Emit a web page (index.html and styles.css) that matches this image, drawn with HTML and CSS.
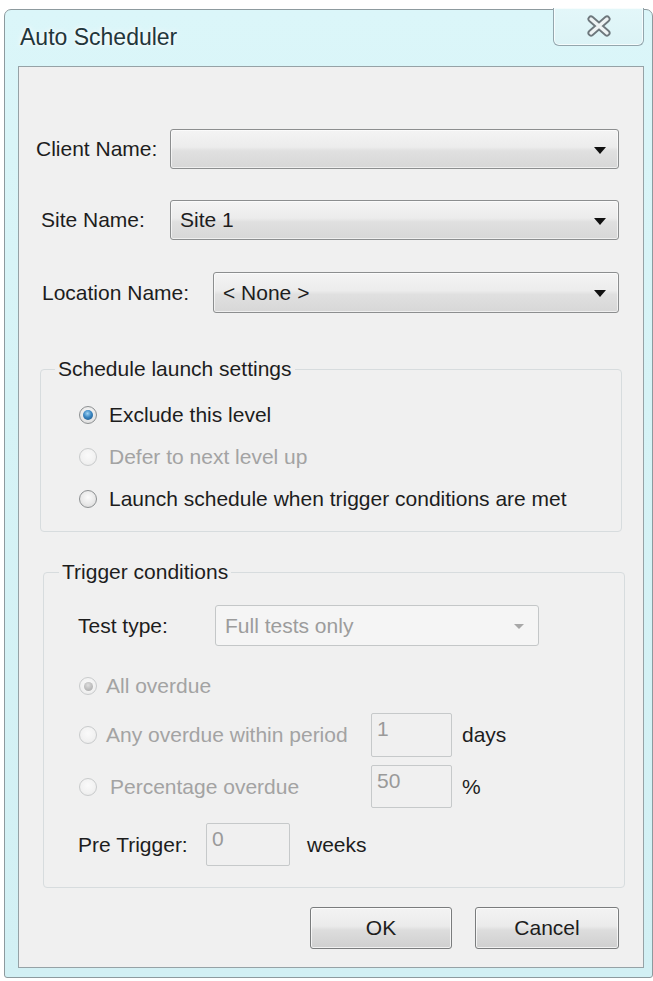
FILE: index.html
```html
<!DOCTYPE html>
<html>
<head>
<meta charset="utf-8">
<title>Auto Scheduler</title>
<link rel="stylesheet" href="styles.css">
</head>
<body>
<div class="window">
  <div class="titlebar">
    <div class="title">Auto Scheduler</div>
    <div class="close">
      <svg width="26" height="22" viewBox="0 0 26 22">
        <path d="M5 4 L21 18 M21 4 L5 18" stroke="#6d777c" stroke-width="7" stroke-linecap="round" fill="none"/>
        <path d="M5 4 L21 18 M21 4 L5 18" stroke="#eef3f4" stroke-width="3.4" stroke-linecap="round" fill="none"/>
      </svg>
    </div>
  </div>
  <div class="panel">
    <div class="row row-client">
      <span class="lbl lbl-client">Client Name:</span>
      <div class="combo combo-client"><span class="val"></span><span class="arrow"></span></div>
    </div>
    <div class="row row-site">
      <span class="lbl lbl-site">Site Name:</span>
      <div class="combo combo-site"><span class="val">Site 1</span><span class="arrow"></span></div>
    </div>
    <div class="row row-location">
      <span class="lbl lbl-location">Location Name:</span>
      <div class="combo combo-location"><span class="val">&lt; None &gt;</span><span class="arrow"></span></div>
    </div>

    <fieldset class="group group-launch">
      <legend class="legend">Schedule launch settings</legend>
      <div class="opt"><span class="radio checked"></span><span class="opt-text">Exclude this level</span></div>
      <div class="opt disabled"><span class="radio dis"></span><span class="opt-text">Defer to next level up</span></div>
      <div class="opt"><span class="radio"></span><span class="opt-text">Launch schedule when trigger conditions are met</span></div>
    </fieldset>

    <fieldset class="group group-trigger">
      <legend class="legend legend-trigger">Trigger conditions</legend>
      <div class="trow trow-type">
        <span class="tlbl tlbl-type">Test type:</span>
        <div class="combo combo-dis"><span class="val">Full tests only</span><span class="arrow arrow-dis"></span></div>
      </div>
      <div class="trow trow-all disabled">
        <span class="radio dis dis-checked"></span><span class="opt-text">All overdue</span>
      </div>
      <div class="trow trow-any">
        <span class="ropt disabled"><span class="radio dis"></span><span class="opt-text">Any overdue within period</span></span>
        <span class="tbox">1</span>
        <span class="unit">days</span>
      </div>
      <div class="trow trow-pct">
        <span class="ropt disabled"><span class="radio dis"></span><span class="opt-text">Percentage overdue</span></span>
        <span class="tbox">50</span>
        <span class="unit">%</span>
      </div>
      <div class="trow trow-pre">
        <span class="tlbl tlbl-pre">Pre Trigger:</span>
        <span class="tbox tbox-pre">0</span>
        <span class="unit unit-pre">weeks</span>
      </div>
    </fieldset>

    <div class="buttons">
      <div class="btn btn-ok">OK</div>
      <div class="btn btn-cancel">Cancel</div>
    </div>
  </div>
</div>
</body>
</html>
```

FILE: styles.css
```css
* { box-sizing: border-box; }

html, body {
  margin: 0;
  padding: 0;
  background: #ffffff;
}

body {
  font-family: "Liberation Sans", Arial, sans-serif;
  font-size: 21px;
  color: #1d1d1d;
  width: 653px;
  height: 981px;
  overflow: hidden;
}

.window {
  margin: 9px 0 0 4px;
  width: 649px;
  height: 969px;
  border: 1px solid #8d9a9e;
  border-radius: 7px 7px 3px 3px;
  background: linear-gradient(180deg, #dbf6f9 0%, #d6f3f6 40%, #d2f0f4 100%);
  display: flex;
  flex-direction: column;
}

.titlebar {
  height: 56px;
  display: flex;
  align-items: flex-start;
  padding-left: 15px;
  flex: none;
}

.title {
  margin-top: 13px;
  font-size: 23px;
  line-height: 28px;
  color: #22363b;
  text-shadow: 0 0 6px #ffffff, 0 0 3px #ffffff;
}

.close {
  margin-left: auto;
  margin-right: 8px;
  margin-top: -2px;
  width: 91px;
  height: 38px;
  border: 1px solid #93a6ad;
  border-top: none;
  border-radius: 0 0 6px 6px;
  background: linear-gradient(180deg, #e3f7f9 0%, #dcf3f6 100%);
  box-shadow: inset 0 0 0 1px rgba(255,255,255,0.7);
  display: flex;
  align-items: center;
  justify-content: center;
  padding-bottom: 2px;
}

.panel {
  margin: 0 8px 0 13px;
  height: 902px;
  border: 1px solid #96a2a6;
  background: #f0f0f0;
  display: flex;
  flex-direction: column;
  flex: none;
}

.row {
  display: flex;
  align-items: center;
  flex: none;
}

.lbl {
  flex: none;
  line-height: 24px;
}

.row-client { margin-top: 62px; padding-left: 17px; }
.row-site { margin-top: 31px; padding-left: 22px; }
.row-location { margin-top: 32px; padding-left: 23px; }

.lbl-client { width: 134px; }
.lbl-site { width: 129px; }
.lbl-location { width: 171px; }

.combo {
  display: flex;
  align-items: center;
  border: 1px solid #8c8e8f;
  border-radius: 3px;
  background: linear-gradient(180deg, #f4f4f4 0%, #ececec 45%, #e0e0e0 55%, #d7d7d7 100%);
  box-shadow: inset 0 0 0 1px rgba(255,255,255,0.6);
  padding-left: 9px;
}

.combo-client { width: 449px; height: 40px; }
.combo-site { width: 449px; height: 40px; }
.combo-location { width: 406px; height: 41px; }

.val {
  flex: 1;
  line-height: 24px;
  white-space: nowrap;
}

.arrow {
  flex: none;
  width: 0;
  height: 0;
  border-left: 6px solid transparent;
  border-right: 6px solid transparent;
  border-top: 7px solid #111;
  margin-right: 12px;
  margin-top: 2px;
}

.group {
  margin: 0;
  border: 1px solid #d7dcde;
  border-radius: 4px;
  min-width: 0;
  flex: none;
}

.legend {
  padding: 0 3px;
  line-height: 24px;
  color: #1d1d1d;
}

.group-launch {
  margin: 44px 21px 0 21px;
  padding: 13px 0 11px 0;
}

.group-launch .legend { margin-left: 14px; }

.opt {
  height: 42px;
  display: flex;
  align-items: center;
  padding-left: 38px;
}

.radio {
  flex: none;
  width: 18px;
  height: 18px;
  border-radius: 50%;
  border: 1px solid #8d9092;
  background: radial-gradient(circle at 50% 40%, #fbfbfb 0%, #e9e9e9 55%, #d4d4d4 100%);
  margin-right: 12px;
  display: flex;
  align-items: center;
  justify-content: center;
}

.radio.checked::after {
  content: "";
  width: 10px;
  height: 10px;
  border-radius: 50%;
  background: radial-gradient(circle at 45% 35%, #9fd3f3 0%, #3a86c2 45%, #174c7c 100%);
}

.radio.dis {
  border-color: #c9cbcc;
  background: radial-gradient(circle at 50% 40%, #fafafa 0%, #f1f1f1 60%, #e6e6e6 100%);
}

.radio.dis-checked::after {
  content: "";
  width: 9px;
  height: 9px;
  border-radius: 50%;
  background: radial-gradient(circle at 45% 35%, #dedede 0%, #b9b9b9 60%, #a7a7a7 100%);
}

.opt-text {
  line-height: 24px;
  white-space: nowrap;
}

.disabled .opt-text,
.disabled.opt .opt-text {
  color: #a3a3a3;
}

.group-trigger {
  margin: 28px 18px 0 24px;
  padding: 21px 0 21px 34px;
}

.legend-trigger { margin-left: -19px; }

.trow {
  display: flex;
  align-items: center;
  flex: none;
}

.tlbl {
  flex: none;
  line-height: 24px;
}

.trow-type { height: 41px; }
.tlbl-type { width: 137px; }

.combo-dis {
  width: 324px;
  height: 41px;
  border-color: #c4c7c8;
  background: #f5f5f5;
  box-shadow: none;
}

.combo-dis .val { color: #9c9c9c; }

.arrow-dis {
  border-top-color: #a8a8a8;
  border-left-width: 5px;
  border-right-width: 5px;
  border-top-width: 5px;
  margin-right: 14px;
}

.trow-all {
  margin-top: 20px;
  height: 40px;
  padding-left: 1px;
}

.trow-all .radio { margin-right: 9px; }

.ropt {
  flex: none;
  width: 293px;
  display: flex;
  align-items: center;
  padding-left: 1px;
}

.ropt .radio { margin-right: 9px; }

.trow-any { margin-top: 7px; height: 44px; }
.trow-pct { margin-top: 8px; height: 43px; }
.trow-pct .radio { margin-right: 13px; }

.tbox {
  flex: none;
  width: 81px;
  height: 100%;
  border: 1px solid #c6c9ca;
  border-radius: 2px;
  background: #f0f0f0;
  color: #9a9a9a;
  padding: 3px 0 0 5px;
  line-height: 24px;
}

.unit {
  margin-left: 10px;
  line-height: 24px;
}

.trow-pre { margin-top: 15px; height: 43px; }
.tlbl-pre { width: 128px; }
.tbox-pre { width: 84px; }
.unit-pre { margin-left: 17px; }

.buttons {
  margin-top: 19px;
  margin-right: 24px;
  display: flex;
  justify-content: flex-end;
  gap: 23px;
  flex: none;
}

.btn {
  height: 42px;
  border: 1px solid #7a7c7d;
  border-radius: 3px;
  background: linear-gradient(180deg, #f3f3f3 0%, #ebebeb 45%, #dddddd 55%, #cfcfcf 100%);
  box-shadow: inset 0 0 0 1px rgba(255,255,255,0.7);
  display: flex;
  align-items: center;
  justify-content: center;
  line-height: 24px;
  color: #1d1d1d;
}

.btn-ok { width: 142px; }
.btn-cancel { width: 144px; }
```
